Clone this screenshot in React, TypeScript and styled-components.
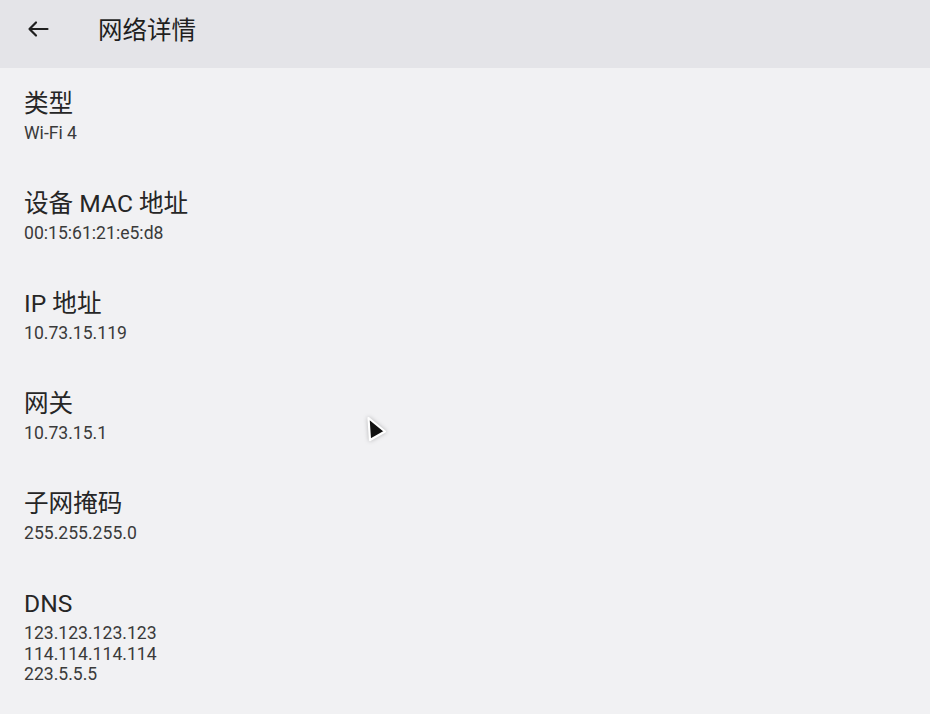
import React from 'react';
import styled, { createGlobalStyle } from 'styled-components';

const GlobalStyle = createGlobalStyle`
  html, body {
    margin: 0;
    padding: 0;
    background: #f1f1f3;
  }
  body {
    font-family: Roboto, "Noto Sans CJK SC", "Noto Sans", sans-serif;
  }
`;

interface Detail {
  id: string;
  title: string;
  values: string[];
}

const details: Detail[] = [
  { id: 'type', title: '类型', values: ['Wi-Fi 4'] },
  { id: 'mac', title: '设备 MAC 地址', values: ['00:15:61:21:e5:d8'] },
  { id: 'ip', title: 'IP 地址', values: ['10.73.15.119'] },
  { id: 'gateway', title: '网关', values: ['10.73.15.1'] },
  { id: 'mask', title: '子网掩码', values: ['255.255.255.0'] },
  { id: 'dns', title: 'DNS', values: ['123.123.123.123', '114.114.114.114', '223.5.5.5'] },
];

const Screen = styled.div`
  position: relative;
  width: 930px;
  height: 714px;
  overflow: hidden;
  background: #f1f1f3;
  display: flex;
  flex-direction: column;
`;

const TopBar = styled.header`
  height: 68px;
  flex-shrink: 0;
  background: #e4e4e8;
  display: flex;
  align-items: center;
  padding: 0 0 10px 26px;
  box-sizing: border-box;
`;

const BackButton = styled.button`
  width: 24px;
  height: 24px;
  padding: 0;
  border: none;
  background: transparent;
  display: flex;
  align-items: center;
  justify-content: center;
  color: #1f1f1f;
`;

const Title = styled.h1`
  margin: -1px 0 0 48px;
  font-size: 24.5px;
  font-weight: 400;
  color: #1f1f1f;
`;

const List = styled.main`
  display: flex;
  flex-direction: column;
  padding-top: 4px;
`;

const Item = styled.section`
  padding: 16px 24px 24px;
  height: 100px;
  box-sizing: border-box;
`;

const ItemTitle = styled.div`
  font-size: 24.6px;
  line-height: 32px;
  color: #262626;
`;

const ValueList = styled.div`
  margin-top: 3px;
  display: flex;
  flex-direction: column;
`;

const ItemValue = styled.div`
  font-size: 17.6px;
  line-height: 20.5px;
  color: #3a3a3a;
`;

const Cursor = styled.svg`
  position: absolute;
  left: 364px;
  top: 414px;
  filter: drop-shadow(0 0 2px rgba(0, 0, 0, 0.25));
`;

const BackArrow = () => (
  <svg width="24" height="24" viewBox="0 0 24 24" fill="none">
    <path
      d="M21.5 12H3.5M10 5.5L3.5 12L10 18.5"
      stroke="currentColor"
      strokeWidth="2.2"
      strokeLinecap="round"
      strokeLinejoin="round"
    />
  </svg>
);

export default function App() {
  return (
    <>
      <GlobalStyle />
      <Screen>
        <TopBar>
          <BackButton aria-label="返回">
            <BackArrow />
          </BackButton>
          <Title>网络详情</Title>
        </TopBar>
        <List>
          {details.map((item) => (
            <Item key={item.id}>
              <ItemTitle>{item.title}</ItemTitle>
              <ValueList>
                {item.values.map((v) => (
                  <ItemValue key={v}>{v}</ItemValue>
                ))}
              </ValueList>
            </Item>
          ))}
        </List>
        <Cursor width="26" height="30" viewBox="0 0 26 30">
          <path
            d="M4.5 4L21 17.5L6 26Z"
            fill="#111"
            stroke="#fff"
            strokeWidth="2.2"
            strokeLinejoin="round"
          />
        </Cursor>
      </Screen>
    </>
  );
}
